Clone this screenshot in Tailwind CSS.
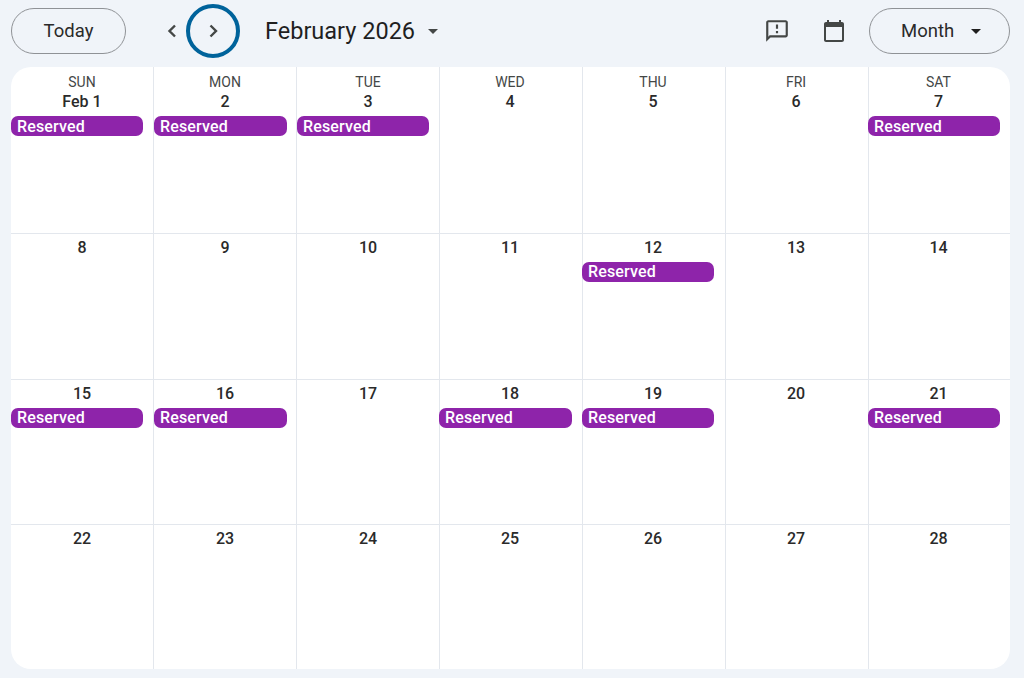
<!DOCTYPE html>
<html lang="en">
<head>
  <meta charset="UTF-8">
  <meta name="viewport" content="width=device-width, initial-scale=1.0">
  <title>Calendar</title>
  <script src="https://cdn.jsdelivr.net/npm/@tailwindcss/browser@4"></script>
</head>
<body class="bg-[#f0f4f9] text-[#1f1f1f] font-['Roboto',sans-serif] h-[678px] overflow-hidden">
  <div class="pl-[11px] pr-[14px]">
    <!-- toolbar -->
    <div class="h-[67px] flex items-start pt-[8px]">
      <button class="w-[115px] h-[46px] pt-[2px] rounded-full border border-[#8f9296] text-[18.5px] font-[450] text-[#2a2a2a]">Today</button>
      <div class="ml-[34px] mt-[-4px] flex items-center">
        <svg class="w-[24px] h-[24px] text-[#444746]" viewBox="0 0 24 24" fill="none" stroke="currentColor" stroke-width="2.4"><path d="M15 6.5L9.5 12l5.5 5.5"/></svg>
        <div class="ml-[2px] w-[54px] h-[54px] rounded-full border-[4px] border-[#00639b] flex items-center justify-center">
          <svg class="w-[24px] h-[24px] text-[#444746]" viewBox="0 0 24 24" fill="none" stroke="currentColor" stroke-width="2.4"><path d="M9.5 6.5L15 12l-5.5 5.5"/></svg>
        </div>
      </div>
      <div class="ml-[25px] h-[46px] pt-[2px] flex items-center text-[23.5px] font-normal text-[#1f1f1f]">February 2026</div>
      <svg class="ml-[6px] mt-[11px] w-[24px] h-[24px] text-[#444746]" viewBox="0 0 24 24" fill="currentColor"><path d="M7 10l5 5 5-5z"/></svg>
      <div class="ml-auto flex items-start">
        <svg class="mt-[10px] w-[26px] h-[26px] text-[#444746]" viewBox="0 0 24 24" fill="currentColor"><path d="M20 2H4c-1.1 0-2 .9-2 2v18l4-4h14c1.1 0 2-.9 2-2V4c0-1.1-.9-2-2-2zm0 14H5.2L4 17.2V4h16v12zM11 12h2v2h-2zm0-6h2v4h-2z"/></svg>
        <svg class="ml-[32px] mt-[11px] w-[24px] h-[24px] text-[#444746]" viewBox="0 0 24 24" fill="currentColor"><path d="M20 3h-1V1h-2v2H7V1H5v2H4c-1.1 0-2 .9-2 2v16c0 1.1.9 2 2 2h16c1.1 0 2-.9 2-2V5c0-1.1-.9-2-2-2zm0 18H4V8h16v13z"/></svg>
        <button class="ml-[23px] w-[141px] h-[46px] pt-[2px] rounded-full border border-[#8f9296] flex items-center pl-[31px] text-[18.5px] font-[450] text-[#2a2a2a]">
          Month
          <svg class="ml-[10px] mt-[-2px] w-[24px] h-[24px] text-[#1f1f1f]" viewBox="0 0 24 24" fill="currentColor"><path d="M7 10l5 5 5-5z"/></svg>
        </button>
      </div>
    </div>

    <!-- month grid -->
    <div class="grid grid-cols-[143px_143px_143px_143px_143px_143px_141px] grid-rows-[167px_146px_145px_144px] bg-white rounded-[20px] overflow-hidden text-center text-[16px] font-[470] text-[#2a2a2a] leading-[20px]">
      <!-- row 1 -->
      <div class="border-r border-b border-[#e3e7ed] pt-[5px]">
        <div class="text-[14px] font-normal text-[#444746]">SUN</div>
        <div>Feb 1</div>
        <div class="mt-[4px] w-[132px] h-[20px] rounded-[7px] bg-[#8e24aa] text-white text-left pl-[6px] leading-[21px] tracking-[0.15px]">Reserved</div>
      </div>
      <div class="border-r border-b border-[#e3e7ed] pt-[5px]">
        <div class="text-[14px] font-normal text-[#444746]">MON</div>
        <div>2</div>
        <div class="mt-[4px] w-[133px] h-[20px] rounded-[7px] bg-[#8e24aa] text-white text-left pl-[6px] leading-[21px] tracking-[0.15px]">Reserved</div>
      </div>
      <div class="border-r border-b border-[#e3e7ed] pt-[5px]">
        <div class="text-[14px] font-normal text-[#444746]">TUE</div>
        <div>3</div>
        <div class="mt-[4px] w-[132px] h-[20px] rounded-[7px] bg-[#8e24aa] text-white text-left pl-[6px] leading-[21px] tracking-[0.15px]">Reserved</div>
      </div>
      <div class="border-r border-b border-[#e3e7ed] pt-[5px] pr-[2px]">
        <div class="text-[14px] font-normal text-[#444746]">WED</div>
        <div>4</div>
      </div>
      <div class="border-r border-b border-[#e3e7ed] pt-[5px] pr-[2px]">
        <div class="text-[14px] font-normal text-[#444746]">THU</div>
        <div>5</div>
      </div>
      <div class="border-r border-b border-[#e3e7ed] pt-[5px] pr-[2px]">
        <div class="text-[14px] font-normal text-[#444746]">FRI</div>
        <div>6</div>
      </div>
      <div class="border-b border-[#e3e7ed] pt-[5px] pr-[2px]">
        <div class="text-[14px] font-normal text-[#444746]">SAT</div>
        <div>7</div>
        <div class="mt-[4px] -ml-px w-[132px] h-[20px] rounded-[7px] bg-[#8e24aa] text-white text-left pl-[6px] leading-[21px] tracking-[0.15px]">Reserved</div>
      </div>
      <!-- row 2 -->
      <div class="border-r border-b border-[#e3e7ed] pt-[4px]">8</div>
      <div class="border-r border-b border-[#e3e7ed] pt-[4px]">9</div>
      <div class="border-r border-b border-[#e3e7ed] pt-[4px]">10</div>
      <div class="border-r border-b border-[#e3e7ed] pt-[4px] pr-[2px]">11</div>
      <div class="border-r border-b border-[#e3e7ed] pt-[4px] pr-[2px]">
        <div>12</div>
        <div class="mt-[4px] -ml-px w-[132px] h-[20px] rounded-[7px] bg-[#8e24aa] text-white text-left pl-[6px] leading-[19px] tracking-[0.15px]">Reserved</div>
      </div>
      <div class="border-r border-b border-[#e3e7ed] pt-[4px] pr-[2px]">13</div>
      <div class="border-b border-[#e3e7ed] pt-[4px] pr-[2px]">14</div>
      <!-- row 3 -->
      <div class="border-r border-b border-[#e3e7ed] pt-[4px]">
        <div>15</div>
        <div class="mt-[4px] w-[132px] h-[20px] rounded-[7px] bg-[#8e24aa] text-white text-left pl-[6px] leading-[19px] tracking-[0.15px]">Reserved</div>
      </div>
      <div class="border-r border-b border-[#e3e7ed] pt-[4px]">
        <div>16</div>
        <div class="mt-[4px] w-[133px] h-[20px] rounded-[7px] bg-[#8e24aa] text-white text-left pl-[6px] leading-[19px] tracking-[0.15px]">Reserved</div>
      </div>
      <div class="border-r border-b border-[#e3e7ed] pt-[4px]">17</div>
      <div class="border-r border-b border-[#e3e7ed] pt-[4px] pr-[2px]">
        <div>18</div>
        <div class="mt-[4px] -ml-px w-[133px] h-[20px] rounded-[7px] bg-[#8e24aa] text-white text-left pl-[6px] leading-[19px] tracking-[0.15px]">Reserved</div>
      </div>
      <div class="border-r border-b border-[#e3e7ed] pt-[4px] pr-[2px]">
        <div>19</div>
        <div class="mt-[4px] -ml-px w-[132px] h-[20px] rounded-[7px] bg-[#8e24aa] text-white text-left pl-[6px] leading-[19px] tracking-[0.15px]">Reserved</div>
      </div>
      <div class="border-r border-b border-[#e3e7ed] pt-[4px] pr-[2px]">20</div>
      <div class="border-b border-[#e3e7ed] pt-[4px] pr-[2px]">
        <div>21</div>
        <div class="mt-[4px] -ml-px w-[132px] h-[20px] rounded-[7px] bg-[#8e24aa] text-white text-left pl-[6px] leading-[19px] tracking-[0.15px]">Reserved</div>
      </div>
      <!-- row 4 -->
      <div class="border-r border-[#e3e7ed] pt-[4px]">22</div>
      <div class="border-r border-[#e3e7ed] pt-[4px]">23</div>
      <div class="border-r border-[#e3e7ed] pt-[4px]">24</div>
      <div class="border-r border-[#e3e7ed] pt-[4px] pr-[2px]">25</div>
      <div class="border-r border-[#e3e7ed] pt-[4px] pr-[2px]">26</div>
      <div class="border-r border-[#e3e7ed] pt-[4px] pr-[2px]">27</div>
      <div class="pt-[4px] pr-[2px]">28</div>
    </div>
  </div>
</body>
</html>
